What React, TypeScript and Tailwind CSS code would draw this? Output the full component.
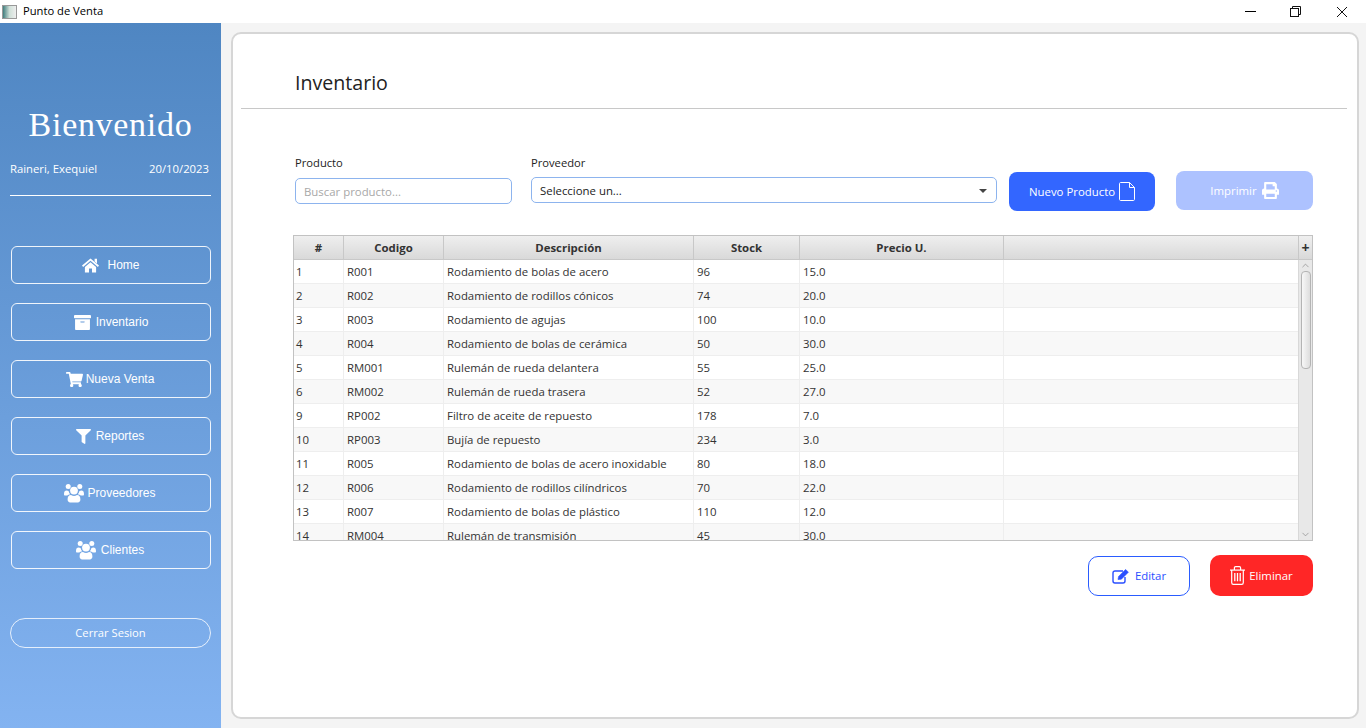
import { FaArchive, FaShoppingCart, FaFilter, FaPrint } from "react-icons/fa";
import { ChevronUp, ChevronDown } from "lucide-react";

const HomeIcon = () => (
  <svg width="17" height="15" viewBox="0 0 17 15" fill="currentColor">
    <path d="M8.5 0.5L17 7.6L15.9 8.9L8.5 2.7L1.1 8.9L0 7.6Z" />
    <path d="M12.6 0.8H15V5.4L12.6 3.4Z" />
    <path d="M2.9 9L8.5 4.3L14.1 9V14.6H10V10.6H7V14.6H2.9Z" />
  </svg>
);

const UsersIcon = () => (
  <svg width="20" height="20" viewBox="0 0 20 20" fill="currentColor">
    <circle cx="4.2" cy="3.6" r="2.5" />
    <circle cx="15.8" cy="3.6" r="2.5" />
    <circle cx="10" cy="7.6" r="3.9" />
    <path d="M0 11.2C0 8.6 1 7.6 2.6 7.6C3.4 7.6 4 8 4.7 8.2C4.9 9.4 5.4 10.4 6.2 11.2C5 11.4 4 11.8 3.4 12.6H1C0.4 12.6 0 12 0 11.2Z" />
    <path d="M20 11.2C20 8.6 19 7.6 17.4 7.6C16.6 7.6 16 8 15.3 8.2C15.1 9.4 14.6 10.4 13.8 11.2C15 11.4 16 11.8 16.6 12.6H19C19.6 12.6 20 12 20 11.2Z" />
    <path d="M3.6 16.5C3.6 13.6 4.6 12 7 12C8 12.6 9 12.9 10 12.9C11 12.9 12 12.6 13 12C15.4 12 16.4 13.6 16.4 16.5C16.4 18.2 15.4 19.4 13.8 19.4H6.2C4.6 19.4 3.6 18.2 3.6 16.5Z" />
  </svg>
);

const FileIcon = () => (
  <svg width="16" height="19" viewBox="0 0 16 19" fill="none" stroke="currentColor" strokeWidth="1">
    <path d="M0.5 1.5C0.5 1 1 0.5 1.5 0.5H10.5L15.5 5.5V17.5C15.5 18 15 18.5 14.5 18.5H1.5C1 18.5 0.5 18 0.5 17.5Z" />
    <path d="M10.5 0.5V5.5H15.5" />
  </svg>
);

const EditIcon = () => (
  <svg width="18" height="16" viewBox="0 0 18 16" fill="none" stroke="currentColor">
    <path d="M11 3H3C1.8 3 1 3.8 1 5V13C1 14.2 1.8 15 3 15H11C12.2 15 13 14.2 13 13V9" strokeWidth="1.4" />
    <path d="M6 11.5L6.6 8.4L13.6 1.4L16.4 4.2L9.4 11.2Z" fill="currentColor" strokeWidth="0.6" />
  </svg>
);

const TrashIcon = () => (
  <svg width="15" height="19" viewBox="0 0 15 19" fill="none" stroke="currentColor" strokeWidth="1.2">
    <path d="M0 4.1H15" />
    <path d="M4.4 4V1.9C4.4 1.2 4.9 0.7 5.6 0.7H9.4C10.1 0.7 10.6 1.2 10.6 1.9V4" />
    <path d="M1.7 4.1V16.4C1.7 17.4 2.4 18.3 3.3 18.3H11.7C12.6 18.3 13.3 17.4 13.3 16.4V4.1" />
    <path d="M4.8 7V15.2M7.5 7V15.2M10.2 7V15.2" strokeWidth="1.3" />
  </svg>
);

const menu = [
  { label: "Home", icon: <HomeIcon />, gap: "gap-[8px]" },
  { label: "Inventario", icon: <FaArchive className="text-[17px]" />, gap: "gap-[5px]" },
  { label: "Nueva Venta", icon: <FaShoppingCart className="text-[17px]" />, gap: "gap-[3px] pr-[2px]" },
  { label: "Reportes", icon: <FaFilter className="text-[15px]" />, gap: "gap-[5px] pr-[2px]" },
  { label: "Proveedores", icon: <UsersIcon />, gap: "gap-[3px] pr-[2px]" },
  { label: "Clientes", icon: <UsersIcon />, gap: "gap-[5px] pr-[2px]" },
];

const productos = [
  ["1", "R001", "Rodamiento de bolas de acero", "96", "15.0"],
  ["2", "R002", "Rodamiento de rodillos cónicos", "74", "20.0"],
  ["3", "R003", "Rodamiento de agujas", "100", "10.0"],
  ["4", "R004", "Rodamiento de bolas de cerámica", "50", "30.0"],
  ["5", "RM001", "Rulemán de rueda delantera", "55", "25.0"],
  ["6", "RM002", "Rulemán de rueda trasera", "52", "27.0"],
  ["9", "RP002", "Filtro de aceite de repuesto", "178", "7.0"],
  ["10", "RP003", "Bujía de repuesto", "234", "3.0"],
  ["11", "R005", "Rodamiento de bolas de acero inoxidable", "80", "18.0"],
  ["12", "R006", "Rodamiento de rodillos cilíndricos", "70", "22.0"],
  ["13", "R007", "Rodamiento de bolas de plástico", "110", "12.0"],
  ["14", "RM004", "Rulemán de transmisión", "45", "30.0"],
];

const headers = ["#", "Codigo", "Descripción", "Stock", "Precio U.", ""];
const colClass = "grid grid-cols-[50px_100px_250px_106px_204px_1fr]";

const App = () => {
  return (
    <div className="w-[1366px] h-[728px] overflow-hidden flex flex-col bg-[#f4f4f4] font-['Open_Sans',sans-serif] text-[11.4px] text-[#333]">
      {/* TITLE BAR */}
      <div className="h-[23px] shrink-0 bg-white flex items-center text-black">
        <div className="ml-[2px] w-[15px] h-[14px] border border-[#999] bg-gradient-to-r from-[#3f7f7f] via-[#cfe0d8] to-[#eeeeee]" />
        <span className="ml-[6px] text-[11.2px]">Punto de Venta</span>
        <div className="ml-auto flex items-center mr-[18px] gap-[34px]">
          <div className="w-[11px] h-px bg-black" />
          <svg width="11" height="11" viewBox="0 0 11 11" fill="none" stroke="#111" strokeWidth="1">
            <rect x="0.5" y="2.5" width="8" height="8" />
            <path d="M2.5 2.5V0.5H10.5V8.5H8.5" />
          </svg>
          <svg width="12" height="12" viewBox="0 0 12 12" stroke="#111" strokeWidth="1" className="ml-[1px]">
            <path d="M1 1L11 11M11 1L1 11" />
          </svg>
        </div>
      </div>

      <div className="flex-1 flex min-h-0">
        {/* SIDEBAR */}
        <div className="w-[221px] shrink-0 bg-gradient-to-b from-[#4f86c2] to-[#83b3f1] flex flex-col text-white pl-[10px] pr-[10px]">
          <div className="mt-[82px] text-center font-['Liberation_Serif',serif] text-[34px] leading-[40px] tracking-[0.7px]">Bienvenido</div>
          <div className="mt-[15px] flex justify-between text-[11.3px] leading-[18px] pr-[2px]">
            <span>Raineri, Exequiel</span>
            <span>20/10/2023</span>
          </div>
          <div className="mt-[17px] h-px bg-white" />
          <div className="mt-[50px] flex flex-col gap-[19px] pl-[1px]">
            {menu.map((item) => (
              <div key={item.label} className={`h-[38px] rounded-[6px] border border-white/90 flex items-center justify-center font-['Liberation_Sans',sans-serif] text-[12px] ${item.gap}`}>
                {item.icon}
                <span>{item.label}</span>
              </div>
            ))}
          </div>
          <div className="mt-[49px] h-[30px] pt-px rounded-full border border-white/80 flex items-center justify-center text-[11.2px]">Cerrar Sesion</div>
        </div>

        {/* CONTENT */}
        <div className="flex-1 pl-[10px] pr-[9px] pt-[9px] pb-[9px]">
          <div className="h-full rounded-[10px] bg-white border-2 border-[#d6d6d6] flex flex-col">
            <div className="h-[75px] ml-[8px] mr-[10px] border-b border-[#c8c8c8] pl-[54px] pt-[35px] text-[19.6px] leading-[28px] text-[#222]">Inventario</div>

            <div className="ml-[60px] mr-[44px]">
              {/* FILTERS */}
              <div className="mt-[45px] h-[81px] flex items-start">
                <div className="ml-[2px] w-[217px]">
                  <div className="text-[11.2px] leading-[17px] text-[#222]">Producto</div>
                  <div className="mt-[7px] h-[26px] pt-px rounded-[5px] border border-[#8db4ee] flex items-center px-[8px] text-[#a8a8a8]">Buscar producto...</div>
                </div>
                <div className="ml-[19px] w-[466px]">
                  <div className="text-[11.2px] leading-[17px] text-[#222]">Proveedor</div>
                  <div className="mt-[6px] h-[26px] pt-px rounded-[5px] border border-[#8db4ee] flex items-center justify-between pl-[8px] pr-[9px] text-[#222]">
                    <span>Seleccione un...</span>
                    <span className="w-0 h-0 border-x-[4px] border-x-transparent border-t-[4px] border-t-[#444]" />
                  </div>
                </div>
                <div className="ml-[12px] mt-[18px] w-[146px] h-[39px] rounded-[8px] bg-[#3366ff] text-white flex items-center justify-center gap-[4px]">
                  <span>Nuevo Producto</span>
                  <FileIcon />
                </div>
                <div className="ml-[21px] mt-[17px] w-[137px] h-[39px] rounded-[8px] bg-[#adc2ff] text-white flex items-center justify-center gap-[5px]">
                  <span>Imprimir</span>
                  <FaPrint className="text-[17px]" />
                </div>
              </div>

              {/* TABLE */}
              <div className="h-[306px] border border-[#c2c2c2] flex flex-col overflow-hidden">
                <div className="flex h-[24px] shrink-0 border-b border-[#c8c8c8] bg-gradient-to-b from-[#efefef] to-[#d9d9d9] font-bold text-[#333]">
                  <div className={`flex-1 ${colClass}`}>
                    {headers.map((h, i) => (
                      <div key={i} className="flex items-center justify-center pt-px border-r border-[#c8c8c8]">{h}</div>
                    ))}
                  </div>
                  <div className="w-[13px] flex items-center justify-center text-[14px] leading-none font-bold">+</div>
                </div>
                <div className="flex flex-1 min-h-0">
                  <div className="flex-1 overflow-hidden">
                    {productos.map((row, idx) => (
                      <div key={row[0]} className={`${colClass} h-[24px] border-b border-[#eeeeee] ${idx % 2 === 1 ? "bg-[#f8f8f8]" : "bg-white"}`}>
                        {row.map((cell, i) => (
                          <div key={i} className={`flex items-center border-r border-[#eeeeee] text-[#333] ${i === 0 ? "pl-[2px]" : "pl-[3px]"}`}>{cell}</div>
                        ))}
                        <div />
                      </div>
                    ))}
                  </div>
                  <div className="w-[14px] shrink-0 bg-[#e8e8e8] border-l border-[#d8d8d8] flex flex-col items-center">
                    <ChevronUp size={11} strokeWidth={1.5} className="text-[#888] h-[11px]" />
                    <div className="w-[10px] h-[98px] rounded-[4px] border border-[#b4b4b4] bg-gradient-to-r from-[#f8f8f8] to-[#dddddd]" />
                    <ChevronDown size={11} strokeWidth={1.5} className="text-[#888] h-[11px] mt-auto" />
                  </div>
                </div>
              </div>

              {/* ACTIONS */}
              <div className="mt-[14px] flex justify-end items-start">
                <div className="mt-px w-[102px] h-[40px] rounded-[10px] border border-[#2a5cff] bg-white text-[#2a4fff] flex items-center justify-center gap-[5px]">
                  <EditIcon />
                  <span>Editar</span>
                </div>
                <div className="ml-[20px] w-[103px] h-[41px] rounded-[10px] bg-[#ff2626] text-white flex items-center justify-center gap-[4px]">
                  <TrashIcon />
                  <span>Eliminar</span>
                </div>
              </div>
            </div>
          </div>
        </div>
      </div>
    </div>
  );
};

export default App;
